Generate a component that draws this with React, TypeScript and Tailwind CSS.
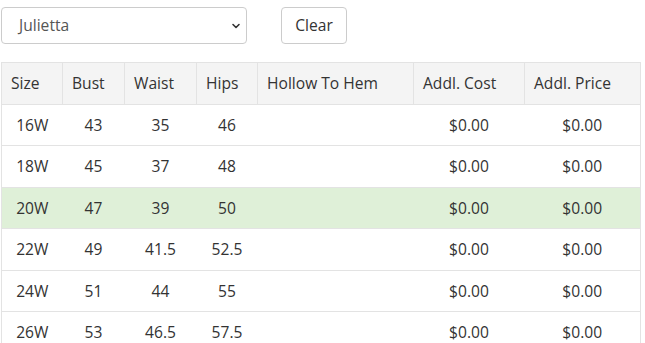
import { ChevronDown } from "lucide-react";

const headers = ["Size", "Bust", "Waist", "Hips", "Hollow To Hem", "Addl. Cost", "Addl. Price"];
const widths = ["w-[61px]", "w-[62px]", "w-[72px]", "w-[61px]", "w-[156px]", "w-[111px]", "w-[116px]"];

const rows = [
  { size: "16W", bust: "43", waist: "35", hips: "46" },
  { size: "18W", bust: "45", waist: "37", hips: "48" },
  { size: "20W", bust: "47", waist: "39", hips: "50", active: true },
  { size: "22W", bust: "49", waist: "41.5", hips: "52.5" },
  { size: "24W", bust: "51", waist: "44", hips: "55" },
  { size: "26W", bust: "53", waist: "46.5", hips: "57.5" },
];

export default function App() {
  return (
    <div className="min-h-screen bg-white pl-px pt-[7px] text-[15.6px] leading-[22.5px] text-[#333] font-['Open_Sans',sans-serif]">
      {/* Toolbar */}
      <div className="flex items-center gap-[34px]">
        <div className="flex h-[37px] w-[246px] items-center justify-between rounded border border-[#ccc] pl-[17px] pr-[4px] text-[#555]">
          <span>Julietta</span>
          <ChevronDown className="h-[12px] w-[12px] text-[#333]" strokeWidth={3.2} />
        </div>
        <button className="h-[37px] w-[66px] rounded border border-[#ccc] bg-white text-[#333]">Clear</button>
      </div>

      {/* Size chart */}
      <table className="mt-[18px] w-[639px] table-fixed border-collapse border border-[#e3e3e3]">
        <colgroup>
          {widths.map((w, i) => (
            <col key={i} className={w} />
          ))}
        </colgroup>
        <thead>
          <tr className="bg-[#f4f4f4]">
            {headers.map((h) => (
              <th key={h} className="border border-[#e3e3e3] py-[9px] pl-[9px] text-left font-normal whitespace-nowrap">
                {h}
              </th>
            ))}
          </tr>
        </thead>
        <tbody>
          {rows.map((r) => (
            <tr key={r.size} className={`border-t border-[#e3e3e3] ${r.active ? "bg-[#dff0d8]" : "bg-white"}`}>
              <td className="py-[9px] text-center">{r.size}</td>
              <td className="py-[9px] text-center">{r.bust}</td>
              <td className="py-[9px] text-center">{r.waist}</td>
              <td className="py-[9px] text-center">{r.hips}</td>
              <td className="py-[9px]"></td>
              <td className="py-[9px] text-center">$0.00</td>
              <td className="py-[9px] text-center">$0.00</td>
            </tr>
          ))}
        </tbody>
      </table>
    </div>
  );
}
